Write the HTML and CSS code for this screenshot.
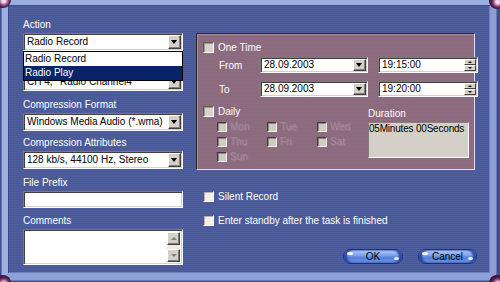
FILE: index.html
```html
<!DOCTYPE html>
<html>
<head>
<meta charset="utf-8">
<link rel="stylesheet" href="styles.css">
</head>
<body>
<div class="window">
  <div class="frame">
    <div class="content">
      <div class="left">
        <div class="field f-action">
          <div class="label">Action</div>
          <div class="combo"><span class="v">Radio Record</span><span class="dd"></span></div>
          <ul class="dropdown">
            <li>Radio Record</li>
            <li class="sel">Radio Play</li>
          </ul>
        </div>
        <div class="field f-channel">
          <div class="label"></div>
          <div class="combo"><span class="v">CH 4, &nbsp;'Radio Channel4'</span><span class="dd"></span></div>
        </div>
        <div class="field f-format">
          <div class="label">Compression Format</div>
          <div class="combo"><span class="v">Windows Media Audio (*.wma)</span><span class="dd"></span></div>
        </div>
        <div class="field f-attr">
          <div class="label">Compression Attributes</div>
          <div class="combo"><span class="v">128 kb/s, 44100 Hz, Stereo</span><span class="dd"></span></div>
        </div>
        <div class="field f-prefix">
          <div class="label">File Prefix</div>
          <div class="input"></div>
        </div>
        <div class="field f-comments">
          <div class="label">Comments</div>
          <div class="textarea">
            <div class="scroll">
              <span class="sbtn up"></span>
              <span class="track"></span>
              <span class="sbtn down"></span>
            </div>
          </div>
        </div>
      </div>

      <div class="right">
        <div class="schedule">
          <div class="row check"><span class="cb"></span>One Time</div>
          <div class="row dt dt-from">
            <span class="dlbl">From</span>
            <div class="combo date"><span class="v">28.09.2003</span><span class="dd"></span></div>
            <div class="combo time"><span class="v">19:15:00</span><span class="spin"><span class="sp up"></span><span class="sp down"></span></span></div>
          </div>
          <div class="row dt dt-to">
            <span class="dlbl">To</span>
            <div class="combo date"><span class="v">28.09.2003</span><span class="dd"></span></div>
            <div class="combo time"><span class="v">19:20:00</span><span class="spin"><span class="sp up"></span><span class="sp down"></span></span></div>
          </div>
          <div class="lower">
            <div class="daily">
              <div class="row check"><span class="cb"></span>Daily</div>
              <div class="days">
                <div class="day"><span class="cb dis"></span>Mon</div>
                <div class="day"><span class="cb dis"></span>Tue</div>
                <div class="day"><span class="cb dis"></span>Wed</div>
                <div class="day"><span class="cb dis"></span>Thu</div>
                <div class="day"><span class="cb dis"></span>Fri</div>
                <div class="day"><span class="cb dis"></span>Sat</div>
                <div class="day"><span class="cb dis"></span>Sun</div>
              </div>
            </div>
            <div class="duration">
              <div class="label">Duration</div>
              <div class="durbox">05Minutes 00Seconds</div>
            </div>
          </div>
        </div>
        <div class="opt opt-silent"><span class="cb light"></span>Silent Record</div>
        <div class="opt opt-standby"><span class="cb light"></span>Enter standby after the task is finished</div>
        <div class="buttons">
          <div class="btn ok">OK</div>
          <div class="btn cancel">Cancel</div>
        </div>
      </div>
    </div>
  </div>
  <span class="knob tl"></span>
  <span class="knob tr"></span>
  <span class="knob bl"></span>
  <span class="knob br"></span>
</div>
</body>
</html>
```

FILE: styles.css
```css
* { box-sizing: border-box; margin: 0; padding: 0; }
html, body { width: 500px; height: 282px; overflow: hidden; }
body {
  background: #3f4d8a;
  font-family: "Liberation Sans", Arial, sans-serif;
  font-size: 10px;
  color: #fff;
}
.window {
  position: relative;
  width: 500px;
  height: 282px;
  padding: 0 4px 2px 2px;
}
.frame {
  height: 100%;
  border-style: solid;
  border-width: 5px 6px 7px 6px;
  border-color: #9aaddf #8b9fd5 #8ea2d8 #9cafe0;
  background: repeating-linear-gradient(180deg, #4a5997 0 1px, #4e5d9b 1px 2px);
  box-shadow: inset 1px 1px 0 #3b4a86, inset -1px -1px 0 #6f81c0, 0 0 0 1px #6577b6;
}
.content {
  display: grid;
  grid-template-columns: 160px 281px;
  column-gap: 13px;
  padding: 14px 0 0 15px;
  align-items: start;
}

/* left column */
.left { display: flex; flex-direction: column; }
.field { position: relative; display: flex; flex-direction: column; gap: 2px; }
.f-channel { margin-top: 8px; }
.f-format { margin-top: 8px; }
.f-attr { margin-top: 6px; }
.f-prefix { margin-top: 8px; }
.f-comments { margin-top: 7px; }
.label { height: 12px; line-height: 12px; white-space: nowrap; }

.combo, .input, .textarea {
  background: #fff;
  color: #000;
  border: 1px solid;
  border-color: #7b7b7b #fff #fff #7b7b7b;
  box-shadow: inset 1px 1px 0 #404040, inset -1px -1px 0 #d4d0c8;
}
.combo {
  height: 18px;
  display: flex;
  align-items: center;
  padding-left: 3px;
}
.combo .v { flex: 1; white-space: nowrap; overflow: hidden; line-height: 12px; }
.input { height: 17px; }
.textarea { height: 36px; display: flex; justify-content: flex-end; padding: 2px; }

.dd {
  width: 13px;
  height: 14px;
  margin-right: 1px;
  background: #d4d0c8;
  border: 1px solid;
  border-color: #fff #404040 #404040 #fff;
  box-shadow: inset -1px -1px 0 #808080;
  position: relative;
  flex: none;
}
.dd::after {
  content: "";
  position: absolute;
  left: 2px;
  top: 4px;
  border-left: 3.5px solid transparent;
  border-right: 3.5px solid transparent;
  border-top: 4px solid #000;
}

.dropdown {
  position: absolute;
  left: 0;
  top: 32px;
  width: 160px;
  background: #fff;
  border: 1px solid #000;
  list-style: none;
  color: #000;
  z-index: 2;
}
.dropdown li { height: 14px; line-height: 14px; padding-left: 1px; }
.dropdown li.sel { background: #0a246a; color: #fff; }

.scroll { width: 13px; display: flex; flex-direction: column; }
.sbtn {
  height: 13px;
  background: #d4d0c8;
  border: 1px solid;
  border-color: #fff #404040 #404040 #fff;
  box-shadow: inset -1px -1px 0 #808080;
  position: relative;
}
.sbtn::after {
  content: "";
  position: absolute;
  left: 3px;
  top: 4px;
  border-left: 3px solid transparent;
  border-right: 3px solid transparent;
}
.sbtn.up::after { border-bottom: 3px solid #808080; }
.sbtn.down::after { border-top: 3px solid #808080; }
.track { flex: 1; background: #eeece8; }

/* right column */
.right { margin-top: 14px; display: flex; flex-direction: column; }
.schedule {
  width: 279px;
  height: 137px;
  background: repeating-linear-gradient(180deg, #8b6a7e 0 1px, #8e6d81 1px 2px);
  border: 1px solid;
  border-color: #2c2030 #e4dcec #e4dcec #2c2030;
  box-shadow: inset 1px 1px 0 #a88ca0;
  padding: 8px 0 0 6px;
}
.row { display: flex; align-items: center; }
.check { height: 11px; gap: 4px; white-space: nowrap; }

.cb {
  width: 11px;
  height: 11px;
  flex: none;
  border: 1px solid;
  border-color: #5f5b56 #fff #fff #5f5b56;
  background: #d8d4cc;
  box-shadow: inset 1px 1px 0 #9a968e;
}
.cb.light { background: #f1efeb; box-shadow: inset 1px 1px 0 #b8b4ac; }
.cb.dis {
  width: 10px;
  height: 10px;
  background: #cfcbc3;
  border-color: #3e3a3a #f4f2ee #f4f2ee #3e3a3a;
  box-shadow: inset 1px 1px 0 #8a8680;
}

.dt {
  display: grid;
  grid-template-columns: 47px 108px 100px;
  column-gap: 10px;
  height: 16px;
  align-items: center;
}
.dt-from { margin-top: 4px; }
.dt-to { margin-top: 8px; }
.dlbl { padding-left: 16px; }
.dt .combo { height: 16px; }
.dt .dd { height: 12px; }
.dt .dd::after { top: 3px; }
.time { padding-left: 3px; }
.spin { width: 12px; height: 12px; margin-right: 1px; display: flex; flex-direction: column; }
.sp {
  flex: 1;
  background: #d4d0c8;
  border: 1px solid;
  border-color: #fff #404040 #404040 #fff;
  position: relative;
}
.sp::after {
  content: "";
  position: absolute;
  left: 3px;
  top: 1px;
  border-left: 2px solid transparent;
  border-right: 2px solid transparent;
}
.sp.up::after { border-bottom: 2px solid #000; }
.sp.down::after { border-top: 2px solid #000; }

.lower {
  display: grid;
  grid-template-columns: 165px 101px;
  margin-top: 9px;
}
.days {
  margin-top: 5px;
  padding-left: 14px;
  display: grid;
  grid-template-columns: 50px 50px 50px;
  grid-auto-rows: 15px;
}
.day {
  display: flex;
  align-items: flex-start;
  gap: 3px;
  line-height: 10px;
  color: #a68a9c;
  text-shadow: 1px 1px 0 #977a8c;
}
.duration { padding-top: 2px; display: flex; flex-direction: column; gap: 2px; }
.durbox {
  height: 36px;
  background: #d4d0c8;
  color: #000;
  border: 1px solid;
  border-color: #808080 #fff #fff #808080;
  line-height: 12px;
  padding-left: 0;
  letter-spacing: -0.2px;
  white-space: nowrap;
  overflow: hidden;
}

.opt { display: flex; align-items: center; gap: 4px; height: 11px; padding-left: 7px; white-space: nowrap; }
.opt-silent { margin-top: 21px; }
.opt-standby { margin-top: 13px; }

.buttons {
  margin-top: 23px;
  display: flex;
  justify-content: flex-end;
  gap: 15px;
}
.btn {
  position: relative;
  height: 15px;
  border-radius: 8px;
  border: 1px solid #1a2c7c;
  background: linear-gradient(180deg, #b6cef6 0%, #7ea4ec 40%, #557fd8 60%, #6f98e6 100%);
  box-shadow: inset 3px 0 2px #2a46a8, inset -3px 0 2px #2a46a8;
  color: #000;
  display: flex;
  align-items: center;
  justify-content: center;
  line-height: 12px;
}
.btn::before {
  content: "";
  position: absolute;
  left: 3px;
  top: 2px;
  width: 6px;
  height: 3px;
  border-radius: 50%;
  background: #fff;
}
.btn::after {
  content: "";
  position: absolute;
  right: 3px;
  bottom: 3px;
  width: 5px;
  height: 3px;
  border-radius: 50%;
  background: #eaf2ff;
}
.ok { width: 60px; }
.cancel { width: 59px; }

/* corner knobs */
.knob {
  position: absolute;
  width: 16px;
  height: 16px;
  border-radius: 50%;
  background: radial-gradient(circle at 55% 55%, #f0d4ea 0 2px, #a0608f 4px, #5a2050 6px, #3a1034 8px);
  z-index: 3;
}
.tl { left: -5px; top: -8px; }
.tr { right: -5px; top: -7px; }
.bl { left: -5px; bottom: -9px; }
.br { right: -5px; bottom: -9px; }
```
